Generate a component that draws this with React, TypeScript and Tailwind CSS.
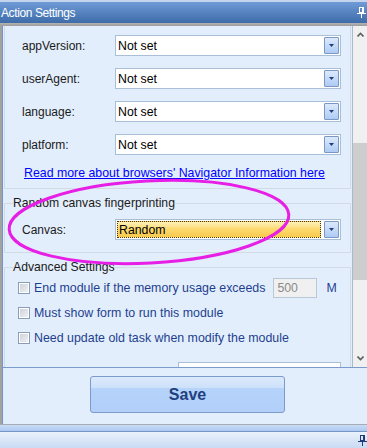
import React from "react";

function Pin({ color }: { color: string }) {
  return (
    <svg width="9" height="11" viewBox="0 0 9 11" fill="none">
      <rect x="2.5" y="0.5" width="4" height="5" stroke={color} />
      <rect x="5" y="0" width="2" height="6" fill={color} />
      <rect x="0" y="6" width="9" height="1" fill={color} />
      <rect x="4" y="7" width="1" height="4" fill={color} />
    </svg>
  );
}

function DropBtn() {
  return (
    <span className="flex h-[17px] w-[15px] shrink-0 items-center justify-center rounded-[1px] border border-[#7b97c6] bg-gradient-to-b from-[#dce9fc] to-[#aecbf4]">
      <svg width="5" height="3" viewBox="0 0 5 3">
        <path d="M0 0h5L2.5 3z" fill="#1f3d7a" />
      </svg>
    </span>
  );
}

function Select({ value }: { value: string }) {
  return (
    <div className="flex h-[21px] w-[226px] items-center justify-between border border-[#a9bfd8] bg-white pl-[2px] pr-[1px]">
      <span className="text-[12.3px] leading-[14px] text-black">{value}</span>
      <DropBtn />
    </div>
  );
}

function Row({ label, value }: { label: string; value: string }) {
  return (
    <div className="flex h-[21px] items-center pl-[17px]">
      <span className="w-[93px] text-[12px] text-[#1a1a1a]">{label}</span>
      <Select value={value} />
    </div>
  );
}

function Check({ label }: { label: string }) {
  return (
    <div className="flex items-center gap-[4px]">
      <span className="flex h-[12px] w-[12px] items-center justify-center border border-[#8a9cb6] bg-white">
        <span className="h-[8px] w-[8px] bg-gradient-to-br from-[#cfd3d9] to-[#eef0f3]" />
      </span>
      <span className="text-[12.4px] text-[#1e3f8f]">{label}</span>
    </div>
  );
}

export default function App() {
  return (
    <div className="relative flex h-[448px] w-[367px] flex-col overflow-hidden bg-[#e3eefc] font-['Liberation_Sans',Arial,sans-serif]">
      {/* title */}
      <div className="flex h-[23px] shrink-0 items-center justify-between border-t-2 border-[#c3d4ec] bg-gradient-to-b from-[#6f9bd6] to-[#3d6ca9] pl-[1px] pr-[1px]">
        <span className="text-[12px] tracking-[-0.4px] text-white">Action Settings</span>
        <Pin color="#ffffff" />
      </div>
      <div className="h-[3px] shrink-0 bg-gradient-to-b from-[#b4b4b4] to-[#9c9c9c]" />

      {/* body with frame */}
      <div className="flex h-[398px] shrink-0 flex-col border-l-2 border-[#a2a2a2]">
        <div className="flex h-full flex-col border-l border-[#7396ca]">
          <div className="flex h-[341px] shrink-0">
            {/* scroll viewport */}
            <div className="w-[349px] overflow-hidden">
              <div className="ml-[1px] w-[347px] border-x border-b border-[#d3dae4] pb-[8px] pt-[9px]">
                <div className="flex flex-col gap-[12px]">
                  <Row label="appVersion:" value="Not set" />
                  <Row label="userAgent:" value="Not set" />
                  <Row label="language:" value="Not set" />
                  <Row label="platform:" value="Not set" />
                </div>
                <div className="mt-[11px] pl-[19px] text-[12.35px] leading-[14px]">
                  <span className="text-[#0000ff] underline">Read more about browsers' Navigator Information here</span>
                </div>
              </div>

              <fieldset className="ml-[1px] mt-[7px] w-[347px] border border-[#d3dae4] pb-[12px]">
                <legend className="ml-[8px] text-[12.2px] leading-[14px] text-[#1a1a1a]">Random canvas fingerprinting</legend>
                <div className="mt-[9px] flex h-[21px] items-center pl-[17px]">
                  <span className="w-[93px] text-[12px] text-[#1a1a1a]">Canvas:</span>
                  <div className="flex h-[21px] w-[226px] items-center gap-[3px] border border-[#a9bfd8] bg-white pl-[1px] pr-[1px]">
                    <div className="flex h-[17px] w-[204px] items-center border border-dotted border-[#4a3a10] bg-gradient-to-b from-[#fff1b8] via-[#fcd86c] to-[#f8c94c] pl-[1px]">
                      <span className="text-[12.3px] leading-[14px] text-black">Random</span>
                    </div>
                    <DropBtn />
                  </div>
                </div>
              </fieldset>

              <fieldset className="ml-[1px] mt-[7px] w-[347px] border border-[#d3dae4] pb-[12px]">
                <legend className="ml-[8px] text-[12.2px] leading-[14px] text-[#1a1a1a]">Advanced Settings</legend>
                <div className="mt-[4px] flex flex-col gap-[5px] pl-[13px]">
                  <div className="flex h-[20px] items-center">
                    <Check label="End module if the memory usage exceeds" />
                    <div className="ml-[8px] flex h-[20px] w-[44px] items-center border border-[#b9c6d6] bg-[#f0f0f0] pl-[3px] text-[12.3px] text-[#8a8a8a]">500</div>
                    <span className="ml-[9px] text-[12.3px] text-[#1e3f8f]">M</span>
                  </div>
                  <div className="flex h-[20px] items-center">
                    <Check label="Must show form to run this module" />
                  </div>
                  <div className="flex h-[20px] items-center">
                    <Check label="Need update old task when modify the module" />
                  </div>
                </div>
                <div className="ml-[173px] mt-[14px] h-[21px] w-[163px] border border-[#a9bfd8] bg-white" />
              </fieldset>
            </div>

            {/* scrollbar */}
            <div className="flex w-[15px] flex-col border-l border-[#a8b9d2] bg-[#f0f0f0]">
              <div className="flex h-[17px] items-center justify-center">
                <svg width="7" height="5" viewBox="0 0 7 5">
                  <path d="M0.5 4.5L3.5 1.5L6.5 4.5" stroke="#606060" strokeWidth="1.6" fill="none" />
                </svg>
              </div>
              <div className="mt-[100px] h-[137px] bg-[#cdcdcd]" />
              <div className="mt-auto flex h-[17px] items-center justify-center">
                <svg width="7" height="5" viewBox="0 0 7 5">
                  <path d="M0.5 0.5L3.5 3.5L6.5 0.5" stroke="#606060" strokeWidth="1.6" fill="none" />
                </svg>
              </div>
            </div>
          </div>

          {/* button panel */}
          <div className="flex-1 border-t border-[#7b9bcb] pt-[8px]">
            <button className="ml-[87px] flex h-[37px] w-[195px] items-center justify-center rounded-[3px] border border-[#7c9bcb] bg-[linear-gradient(to_bottom,#dce9fc_0%,#cde1fb_30%,#b6d3fa_32%,#b1cff9_100%)] text-[16px] font-bold text-[#1f3f7f]">
              Save
            </button>
          </div>
        </div>
      </div>

      {/* bottom */}
      <div className="h-[1px] shrink-0 bg-[#a6acb4]" />
      <div className="h-[6px] shrink-0 bg-gradient-to-b from-[#c9dcf6] to-[#adc9f1]" />
      <div className="h-[1px] shrink-0 bg-[#7495c6]" />
      <div className="flex h-[16px] shrink-0 items-center justify-end bg-gradient-to-b from-[#eaf1fc] to-[#c9dbf3] pr-0">
        <Pin color="#1e3d7a" />
      </div>

      {/* annotation ellipse */}
      <svg className="pointer-events-none absolute left-0 top-0" width="367" height="448">
        <ellipse cx="149" cy="222" rx="140" ry="41" transform="rotate(-3 149 222)" fill="none" stroke="#e61ee6" strokeWidth="3" />
      </svg>
    </div>
  );
}
